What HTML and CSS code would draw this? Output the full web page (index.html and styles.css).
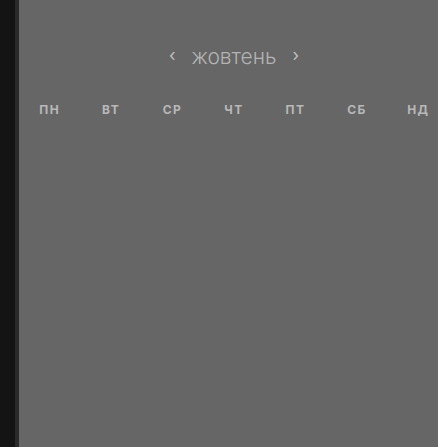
FILE: index.html
```html
<!DOCTYPE html>
<html lang="uk">
<head>
<meta charset="utf-8">
<link rel="stylesheet" href="styles.css">
</head>
<body>
<div class="app">
  <aside class="sidebar"></aside>
  <main class="calendar">
    <div class="month-nav">
      <span class="arrow">‹</span>
      <span class="month">жовтень</span>
      <span class="arrow">›</span>
    </div>
    <div class="weekdays">
      <div class="wd">пн</div>
      <div class="wd">вт</div>
      <div class="wd">ср</div>
      <div class="wd">чт</div>
      <div class="wd">пт</div>
      <div class="wd">сб</div>
      <div class="wd">нд</div>
    </div>
  </main>
</div>
</body>
</html>
```
FILE: styles.css
```css
html, body {
  margin: 0;
  padding: 0;
  height: 100%;
  overflow: hidden;
  background: #666666;
}
.app {
  display: flex;
  height: 447px;
}
.sidebar {
  width: 15px;
  flex-shrink: 0;
  background: #141414;
  border-right: 4px solid #2a2a2a;
}
.calendar {
  width: 430px;
  flex-shrink: 0;
  background: #666666;
  font-family: Inter, "Noto Sans", sans-serif;
}
.month-nav {
  display: flex;
  justify-content: center;
  align-items: center;
  gap: 16px;
  padding-top: 43px;
  height: 28px;
  color: #b0b0b0;
}
.month {
  font-size: 21px;
  font-weight: 300;
  color: #b4b4b4;
  margin-top: -1px;
}
.arrow {
  font-size: 17px;
  color: #c0c0c0;
  line-height: 1;
  margin-top: -3px;
}
.weekdays {
  display: grid;
  grid-template-columns: repeat(7, 1fr);
  margin-top: 31px;
}
.wd {
  text-align: center;
  font-size: 12px;
  font-weight: 700;
  text-transform: uppercase;
  letter-spacing: 1.4px;
  color: #b8b8b8;
}
```
